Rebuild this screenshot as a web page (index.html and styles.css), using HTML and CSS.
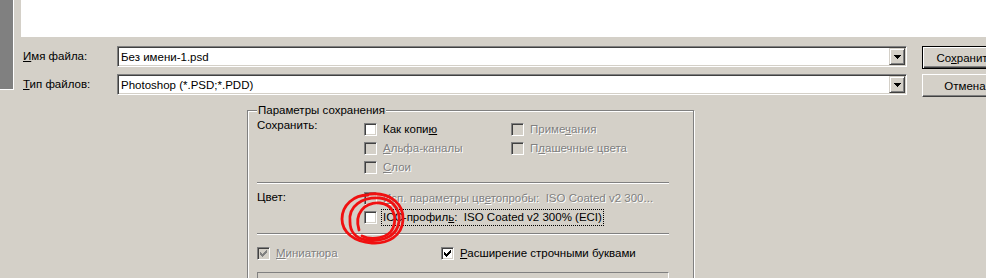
FILE: index.html
```html
<!DOCTYPE html>
<html lang="ru">
<head>
  <meta charset="UTF-8" />
  <title>Сохранить как</title>
  <link rel="stylesheet" href="styles.css">
</head>
<body>
  <div class="dialog">
    <div class="places"></div>
    <div class="main">
      <div class="file-list"></div>

      <div class="file-rows">
        <div class="file-row">
          <span class="file-label"><u>И</u>мя файла:</span>
          <div class="combo">
            <span class="combo-text">Без имени-1.psd</span>
            <span class="combo-btn"><svg width="7" height="4" viewBox="0 0 7 4"><path d="M0 0h7v1H6v1H5v1H4v1H3V3H2V2H1V1H0z"/></svg></span>
          </div>
          <button class="btn btn-default">Со<u>х</u>ранить</button>
        </div>
        <div class="file-row">
          <span class="file-label"><u>Т</u>ип файлов:</span>
          <div class="combo">
            <span class="combo-text">Photoshop (*.PSD;*.PDD)</span>
            <span class="combo-btn"><svg width="7" height="4" viewBox="0 0 7 4"><path d="M0 0h7v1H6v1H5v1H4v1H3V3H2V2H1V1H0z"/></svg></span>
          </div>
          <button class="btn">Отмена</button>
        </div>
      </div>

      <fieldset class="options">
        <legend>Параметры сохранения</legend>

        <div class="opt-grid opt-save">
          <span class="opt-label">Сохранить:</span>
          <label class="cb">
            <span class="box"></span>
            <span class="cb-text">Как копи<u>ю</u></span>
          </label>
          <label class="cb is-disabled">
            <span class="box"></span>
            <span class="cb-text">Приме<u>ч</u>ания</span>
          </label>

          <span></span>
          <label class="cb is-disabled">
            <span class="box"></span>
            <span class="cb-text"><u>А</u>льфа-каналы</span>
          </label>
          <label class="cb is-disabled">
            <span class="box"></span>
            <span class="cb-text">П<u>л</u>ашечные цвета</span>
          </label>

          <span></span>
          <label class="cb is-disabled">
            <span class="box"></span>
            <span class="cb-text"><u>С</u>лои</span>
          </label>
        </div>

        <hr class="sep sep-save">

        <div class="opt-grid opt-color">
          <span class="opt-label">Цвет:</span>
          <label class="cb is-disabled">
            <span class="box"></span>
            <span class="cb-text"><u>И</u>сп. параметры цв<u>е</u>топробы:  ISO Coated v2 300...</span>
          </label>

          <span></span>
          <label class="cb is-focused">
            <span class="box"></span>
            <span class="cb-text">ICC-профил<u>ь</u>:  ISO Coated v2 300% (ECI)</span>
          </label>
        </div>

        <hr class="sep sep-color">

        <div class="opt-extra">
          <label class="cb is-disabled">
            <span class="box"><svg width="11" height="11" viewBox="0 0 11 11"><path d="M2 4h1v3H2zM3 5h1v3H3zM4 6h1v3H4zM5 5h1v3H5zM6 4h1v3H6zM7 3h1v3H7zM8 2h1v3H8z"/></svg></span>
            <span class="cb-text"><u>М</u>иниатюра</span>
          </label>
          <label class="cb">
            <span class="box"><svg width="11" height="11" viewBox="0 0 11 11"><path d="M2 4h1v3H2zM3 5h1v3H3zM4 6h1v3H4zM5 5h1v3H5zM6 4h1v3H6zM7 3h1v3H7zM8 2h1v3H8z"/></svg></span>
            <span class="cb-text"><u>Р</u>асширение строчными буквами</span>
          </label>
        </div>

        <div class="preview"></div>
      </fieldset>
    </div>
  </div>

  <!-- hand-drawn marker circles over the ICC checkbox -->
  <svg class="scribble" width="986" height="278" viewBox="0 0 986 278">
    <path d="M370 194 C390 192 404 204 403 220 C402 236 388 244 372 243 C354 242 342 232 342 219 C342 205 354 195 368 195" />
    <path d="M350 222 C348 206 362 197 380 198 C396 200 402 214 398 226 C394 238 380 242 366 240 C354 238 350 230 350 222" />
    <path d="M359 230 C354 214 364 202 380 203 C392 204 398 216 393 228 C389 238 372 241 362 236" />
  </svg>
</body>
</html>
```

FILE: styles.css
```css
* {
  box-sizing: border-box;
}

body {
  margin: 0;
  height: 278px;
  overflow: hidden;
  position: relative;
  background: #d4d0c8;
  font-family: "Liberation Sans", "DejaVu Sans", sans-serif;
  font-size: 11.5px;
  color: #000;
}

u {
  text-underline-offset: 1px;
}

.dialog {
  display: flex;
  align-items: flex-start;
}

.places {
  flex: none;
  width: 14px;
  height: 90px;
  background: #808080;
  border-right: 1px solid #fff;
  border-bottom: 1px solid #fff;
  margin-right: 7px;
}

.main {
  flex: 1;
  min-width: 0;
  overflow: hidden;
}

.file-list {
  height: 37px;
  background: #fff;
}

/* file name / type rows */
.file-rows {
  margin-top: 9px;
  display: flex;
  flex-direction: column;
  gap: 5px;
}

.file-row {
  display: flex;
  align-items: flex-start;
  height: 23px;
}

.file-label {
  flex: none;
  width: 96px;
  padding-left: 2px;
  line-height: 21px;
}

.combo {
  flex: none;
  width: 790px;
  height: 21px;
  display: flex;
  align-items: center;
  padding: 0 1px 0 3px;
  background: #fff;
  border: 1px solid;
  border-color: #808080 #fff #fff #808080;
  box-shadow: inset 1px 1px #404040, inset -1px -1px #d4d0c8;
}

.combo-text {
  flex: 1;
}

.combo-btn {
  flex: none;
  width: 16px;
  height: 17px;
  display: flex;
  align-items: center;
  justify-content: center;
  background: #d4d0c8;
  border: 1px solid;
  border-color: #d4d0c8 #404040 #404040 #d4d0c8;
  box-shadow: inset 1px 1px #fff, inset -1px -1px #808080;
}

.combo-btn svg {
  fill: #000;
  margin-top: 1px;
}

.btn {
  flex: none;
  width: 86px;
  height: 23px;
  margin-left: 15px;
  padding: 0;
  font: inherit;
  color: #000;
  background: #d4d0c8;
  border: 1px solid;
  border-color: #fff #404040 #404040 #fff;
  box-shadow: inset -1px -1px #808080;
}

.btn-default {
  border-color: #000;
  box-shadow: inset 1px 1px #fff, inset -1px -1px #404040, inset -2px -2px #808080;
}

/* save options group */
.options {
  width: 447px;
  margin: 7px 0 0 226px;
  padding: 2px 9px 0 9px;
  border: 1px solid #808080;
  box-shadow: inset 1px 1px #fff, 1px 1px #fff;
  min-width: 0;
}

.options legend {
  padding: 0 1px;
  line-height: 13px;
  background: #d4d0c8;
}

.opt-grid {
  display: grid;
  grid-template-columns: 107px 147px auto;
}

.opt-save {
  grid-template-rows: 20px 19px 19px;
}

.opt-color {
  grid-template-rows: 19px 19px;
}

.opt-color .cb {
  grid-column: span 2;
}

.opt-label {
  align-self: start;
  line-height: 13px;
}

.opt-color .opt-label {
  margin-top: 2px;
}

.sep {
  width: 412px;
  height: 2px;
  margin: 5px 0 0 0;
  border: 0;
  border-top: 1px solid #808080;
  border-bottom: 1px solid #fff;
}

.sep-save {
  margin-bottom: 5px;
}

.sep-color {
  margin-top: 6px;
  margin-bottom: 9px;
}

.opt-extra {
  display: grid;
  grid-template-columns: 184px auto;
  height: 19px;
}

.preview {
  width: 412px;
  height: 40px;
  margin-top: 9px;
  border: 1px solid;
  border-color: #808080 #fff #fff #808080;
}

/* classic checkboxes */
.cb {
  display: flex;
  align-items: center;
  white-space: pre;
}

.box {
  flex: none;
  width: 13px;
  height: 13px;
  background: #fff;
  border: 1px solid;
  border-color: #808080 #fff #fff #808080;
  box-shadow: inset 1px 1px #404040, inset -1px -1px #d4d0c8;
}

.box svg {
  display: block;
  fill: #000;
}

.cb-text {
  margin-left: 4px;
  padding: 0 1px;
  line-height: 13px;
  border: 1px solid transparent;
}

.is-disabled .box {
  background: #d4d0c8;
}

.is-disabled .box svg {
  fill: #808080;
}

.is-disabled .cb-text {
  color: #808080;
  text-shadow: 1px 1px 0 #fff;
}

.is-focused .cb-text {
  border: 1px dotted #000;
  line-height: 15px;
}

.scribble {
  position: absolute;
  left: 0;
  top: 0;
  pointer-events: none;
  fill: none;
  stroke: #f01010;
  stroke-width: 2.8;
  stroke-linecap: round;
}
```
